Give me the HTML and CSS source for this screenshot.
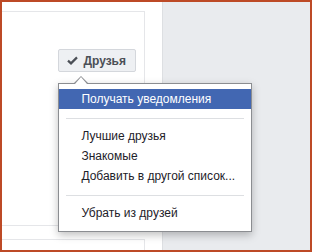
FILE: index.html
```html
<!DOCTYPE html>
<html lang="ru">
<head>
  <meta charset="UTF-8">
  <title>Друзья</title>
  <link rel="stylesheet" href="styles.css">
</head>
<body>
  <div class="frame">
    <div class="main">
      <div class="card">
        <div class="actions">
          <div class="friend-btn">
            <svg class="check" width="11" height="9" viewBox="0 0 11 9">
              <path d="M1 4.6 L4 7.4 L10 1.4" fill="none" stroke="#4b4f56" stroke-width="2.2"/>
            </svg>
            <span>Друзья</span>
            <div class="menu">
              <div class="item active">Получать уведомления</div>
              <div class="sep"></div>
              <div class="item">Лучшие друзья</div>
              <div class="item">Знакомые</div>
              <div class="item">Добавить в другой список...</div>
              <div class="sep"></div>
              <div class="item">Убрать из друзей</div>
            </div>
          </div>
        </div>
      </div>
      <div class="card card-next"></div>
    </div>
    <div class="side"></div>
  </div>
</body>
</html>
```

FILE: styles.css
```css
body {
  margin: 0;
  font-family: "Liberation Sans", Arial, sans-serif;
  font-size: 12px;
}
.frame {
  width: 312px;
  height: 252px;
  box-sizing: border-box;
  border: 2px solid #bd4a26;
  display: flex;
  overflow: hidden;
}
.main {
  width: 160px;
  background: #fff;
}
.side {
  flex: 1;
  background: #e9ebee;
  border-left: 1px solid #dddfe2;
}
.card {
  width: 142px;
  height: 213px;
  margin-top: 9px;
  border: 1px solid #e5e6e9;
  border-left: none;
}
.card-next {
  margin-top: 13px;
}
.actions {
  display: flex;
  justify-content: flex-end;
  padding: 37px 8px 0 0;
}
.friend-btn {
  position: relative;
  display: flex;
  align-items: center;
  gap: 5px;
  height: 21px;
  padding: 0 9px 0 8px;
  background: #eef0f3;
  border: 1px solid #d4d7dc;
  border-radius: 2px;
  font-weight: bold;
  color: #4b4f56;
}
.check {
  display: block;
}
.menu {
  position: absolute;
  left: -1px;
  top: 33px;
  width: 192px;
  padding: 5px 0 8px;
  background: #fff;
  border: 1px solid #8b8d91;
  box-shadow: 0 3px 8px rgba(0, 0, 0, 0.25);
  font-weight: normal;
  color: #1d2129;
  z-index: 2;
}
.menu::before,
.menu::after {
  content: "";
  position: absolute;
  width: 0;
  height: 0;
  border-style: solid;
  border-color: transparent;
}
.menu::before {
  top: -8px;
  left: 15px;
  border-width: 0 7px 7px 7px;
  border-bottom-color: #8b8d91;
}
.menu::after {
  top: -7px;
  left: 16px;
  border-width: 0 6px 7px 6px;
  border-bottom-color: #fff;
}
.item {
  height: 20px;
  line-height: 20px;
  padding: 0 22px;
  white-space: nowrap;
}
.item.active {
  background: #4267b2;
  color: #fff;
}
.sep {
  height: 1px;
  margin: 9px 7px 7px;
  background: #dddfe2;
}
```
